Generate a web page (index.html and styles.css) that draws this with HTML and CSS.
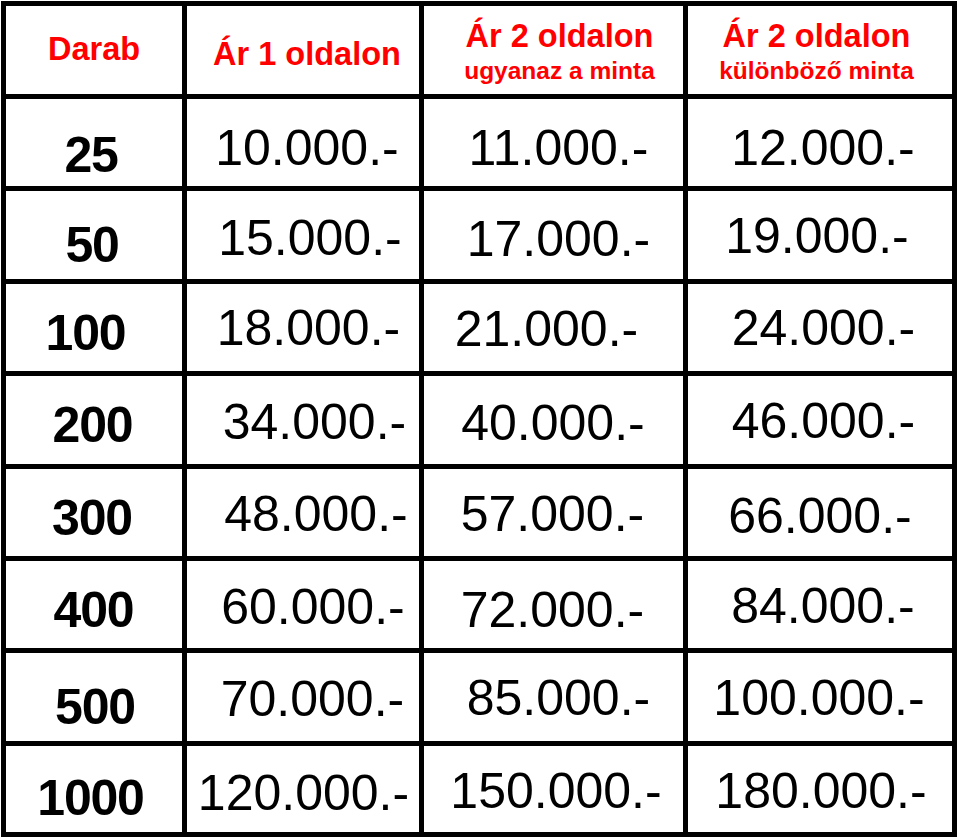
FILE: index.html
```html
<!DOCTYPE html>
<html lang="hu">
<head>
<meta charset="utf-8">
<title>Árak</title>
<link rel="stylesheet" href="styles.css">
</head>
<body>
<div class="price-table">
  <div class="cell head head-single"><span class="h-main">Darab</span></div>
  <div class="cell head head-single pt-10 pl-8"><span class="h-main">Ár 1 oldalon</span></div>
  <div class="cell head head-double pl-12"><span class="h-main">Ár 2 oldalon</span><span class="h-sub">ugyanaz a minta</span></div>
  <div class="cell head head-double pr-7"><span class="h-main">Ár 2 oldalon</span><span class="h-sub">különböző minta</span></div>

  <div class="cell qty pt-24 pr-6">25</div>
  <div class="cell price pt-11 pl-8">10.000.-</div>
  <div class="cell price pt-10 pl-10">11.000.-</div>
  <div class="cell price pt-10 pl-6">12.000.-</div>

  <div class="cell qty pt-19 pr-4">50</div>
  <div class="cell price pt-5 pl-14">15.000.-</div>
  <div class="cell price pt-8 pl-10">17.000.-</div>
  <div class="cell price pt-1 pr-6">19.000.-</div>

  <div class="cell qty pt-10 pr-17">100</div>
  <div class="cell price pt-1 pl-11">18.000.-</div>
  <div class="cell price pt-3 pr-14">21.000.-</div>
  <div class="cell price pt-0 pl-7">24.000.-</div>

  <div class="cell qty pt-9 pr-3">200</div>
  <div class="cell price pt-4 pl-23">34.000.-</div>
  <div class="cell price pt-5 pr-1">40.000.-</div>
  <div class="cell price pt-1 pl-7">46.000.-</div>

  <div class="cell qty pt-10 pr-4">300</div>
  <div class="cell price pt-3 pl-26">48.000.-</div>
  <div class="cell price pt-3 pr-2">57.000.-</div>
  <div class="cell price pt-6">66.000.-</div>

  <div class="cell qty pt-11 pr-1">400</div>
  <div class="cell price pt-5 pl-20">60.000.-</div>
  <div class="cell price pt-10 pr-2">72.000.-</div>
  <div class="cell price pt-2 pl-6">84.000.-</div>

  <div class="cell qty pt-19 pl-2">500</div>
  <div class="cell price pt-4 pl-19">70.000.-</div>
  <div class="cell price pt-1 pl-10">85.000.-</div>
  <div class="cell price pt-1 pr-2">100.000.-</div>

  <div class="cell qty pt-17 pr-7">1000</div>
  <div class="cell price pt-7 pl-1">120.000.-</div>
  <div class="cell price pt-3 pl-5">150.000.-</div>
  <div class="cell price pt-3 pl-2">180.000.-</div>
</div>
</body>
</html>
```

FILE: styles.css
```css
html, body {
  margin: 0;
  padding: 0;
  background: #ffffff;
}

body {
  padding: 1px 0 0 1px;
  font-family: "Liberation Sans", Arial, sans-serif;
}

.price-table {
  display: grid;
  grid-template-columns: 176px 232px 259px 264px;
  grid-template-rows: 88px 87px 88px 87px 88px 87px 87px 88px 86px;
  gap: 5px;
  padding: 5px;
  width: max-content;
  background: #000000;
}

.cell {
  background: #ffffff;
  display: flex;
  align-items: center;
  justify-content: center;
  box-sizing: border-box;
  white-space: nowrap;
  color: #000000;
}

/* header */
.head {
  flex-direction: column;
  color: #ff0000;
  font-weight: bold;
}

.h-main {
  font-size: 32.5px;
  line-height: 36px;
}

.h-sub {
  font-size: 24.5px;
  line-height: 34px;
}

.head-single {
  padding-bottom: 2px;
}

.head-double {
  padding-top: 5px;
}

/* quantity column */
.qty {
  font-size: 50px;
  font-weight: bold;
  letter-spacing: -1.2px;
}

/* prices */
.price {
  font-size: 50px;
}

/* fine placement of the hand-set figures */
.pt-0 { padding-top: 0; }
.pt-1 { padding-top: 1px; }
.pt-2 { padding-top: 2px; }
.pt-3 { padding-top: 3px; }
.pt-4 { padding-top: 4px; }
.pt-5 { padding-top: 5px; }
.pt-6 { padding-top: 6px; }
.pt-7 { padding-top: 7px; }
.pt-8 { padding-top: 8px; }
.pt-9 { padding-top: 9px; }
.pt-10 { padding-top: 10px; }
.pt-11 { padding-top: 11px; }
.pt-17 { padding-top: 17px; }
.pt-19 { padding-top: 19px; }
.pt-24 { padding-top: 24px; }

.pl-1 { padding-left: 1px; }
.pl-2 { padding-left: 2px; }
.pl-5 { padding-left: 5px; }
.pl-6 { padding-left: 6px; }
.pl-7 { padding-left: 7px; }
.pl-8 { padding-left: 8px; }
.pl-10 { padding-left: 10px; }
.pl-11 { padding-left: 11px; }
.pl-12 { padding-left: 12px; }
.pl-14 { padding-left: 14px; }
.pl-19 { padding-left: 19px; }
.pl-20 { padding-left: 20px; }
.pl-23 { padding-left: 23px; }
.pl-26 { padding-left: 26px; }

.pr-1 { padding-right: 1px; }
.pr-2 { padding-right: 2px; }
.pr-3 { padding-right: 3px; }
.pr-4 { padding-right: 4px; }
.pr-6 { padding-right: 6px; }
.pr-7 { padding-right: 7px; }
.pr-14 { padding-right: 14px; }
.pr-17 { padding-right: 17px; }
```
